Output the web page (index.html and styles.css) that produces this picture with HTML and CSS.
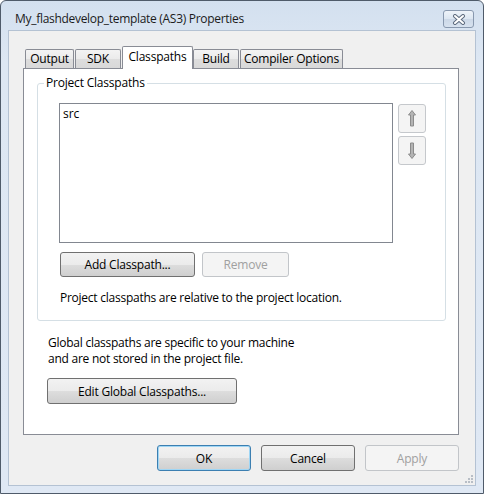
FILE: index.html
```html
<!DOCTYPE html>
<html lang="en">
<head>
    <meta charset="UTF-8">
    <title>My_flashdevelop_template (AS3) Properties</title>
    <link rel="stylesheet" href="styles.css">
</head>
<body>
<div class="window">
    <div class="titlebar">
        <span class="title">My_flashdevelop_template (AS3) Properties</span>
        <div class="close">
            <svg width="14" height="11" viewBox="0 0 14 11">
                <path d="M3 2 L11 9 M11 2 L3 9" stroke="#5d6b7e" stroke-width="4" stroke-linecap="round"/>
                <path d="M3 2 L11 9 M11 2 L3 9" stroke="#fff" stroke-width="2" stroke-linecap="round"/>
            </svg>
        </div>
    </div>

    <div class="client">
        <div class="tabs">
            <div class="tab tab-output">Output</div>
            <div class="tab tab-sdk">SDK</div>
            <div class="tab tab-classpaths selected">Classpaths</div>
            <div class="tab tab-build">Build</div>
            <div class="tab tab-compiler">Compiler Options</div>
        </div>

        <div class="panel">
            <fieldset class="group">
                <legend>Project Classpaths</legend>
                <div class="list-row">
                    <div class="listbox">src</div>
                    <div class="move-buttons">
                        <div class="move-btn">
                            <svg width="8" height="17" viewBox="0 0 8 17">
                                <path d="M4 0.5 L7.5 5 L5.5 5 L5.5 16 L2.5 16 L2.5 5 L0.5 5 Z" fill="#b4b4b4" stroke="#8c8c8c" stroke-width="1"/>
                            </svg>
                        </div>
                        <div class="move-btn">
                            <svg width="8" height="17" viewBox="0 0 8 17">
                                <path d="M4 16.5 L7.5 12 L5.5 12 L5.5 1 L2.5 1 L2.5 12 L0.5 12 Z" fill="#b4b4b4" stroke="#8c8c8c" stroke-width="1"/>
                            </svg>
                        </div>
                    </div>
                </div>
                <div class="list-actions">
                    <button class="btn btn-add">Add Classpath...</button>
                    <button class="btn btn-remove" disabled>Remove</button>
                </div>
                <p class="note">Project classpaths are relative to the project location.</p>
            </fieldset>

            <p class="global-note">Global classpaths are specific to your machine<br>and are not stored in the project file.</p>
            <button class="btn btn-global">Edit Global Classpaths...</button>
        </div>

        <div class="dialog-buttons">
            <button class="btn btn-dialog default">OK</button>
            <button class="btn btn-dialog">Cancel</button>
            <button class="btn btn-dialog" disabled>Apply</button>
        </div>

        <div class="grip">
            <span></span><span></span><span></span>
            <span></span><span></span><span></span>
        </div>
    </div>
</div>
</body>
</html>
```

FILE: styles.css
```css
* {
    box-sizing: border-box;
}

body {
    margin: 0;
    background-color: #ffffff;
    font-family: "Open Sans", "Noto Sans", sans-serif;
    font-size: 12px;
    color: #000;
}

.window {
    width: 484px;
    height: 494px;
    display: flex;
    flex-direction: column;
    border: 1px solid #4f5b6a;
    border-radius: 6px 6px 0 0;
    background: linear-gradient(#d3e0ef, #dde7f3 60px, #dfe8f4);
    padding: 0 7px 7px 7px;
}

/* barra de titulo */
.titlebar {
    height: 29px;
    display: flex;
    align-items: flex-start;
    padding-left: 7px;
}

.title {
    margin-top: 9px;
    color: #1b1b1b;
    letter-spacing: -0.3px;
}

.close {
    margin-left: auto;
    margin-right: 2px;
    margin-top: 9px;
    width: 31px;
    height: 18px;
    border: 1px solid #8898ae;
    border-radius: 3px;
    background: linear-gradient(#eef3f9, #dce6f1 50%, #ccd8e7 51%, #d7e2ef);
    display: flex;
    align-items: center;
    justify-content: center;
}

/* area de cliente */
.client {
    flex: 1;
    position: relative;
    background-color: #f0f0f0;
    border: 1px solid #b4c2d3;
    padding: 15px 16px 0 14px;
}

.tabs {
    display: flex;
    align-items: flex-end;
    height: 22px;
    padding-left: 2px;
}

.tab {
    height: 19px;
    border: 1px solid #898c95;
    border-bottom: none;
    border-radius: 2px 2px 0 0;
    background: linear-gradient(#f3f3f3, #ebebeb 50%, #dddddd 51%, #d9d9d9);
    text-align: center;
    line-height: 17px;
    letter-spacing: -0.2px;
}

.tab.selected {
    height: 23px;
    margin-bottom: -1px;
    position: relative;
    z-index: 1;
    background: #ffffff;
    line-height: 20px;
}

.tab-output { width: 49px; }
.tab-sdk { width: 46px; margin-left: 1px; }
.tab-classpaths { width: 71px; margin-left: 1px; }
.tab-build { width: 46px; }
.tab-compiler { width: 103px; margin-left: 1px; }

.panel {
    width: 436px;
    height: 367px;
    background-color: #ffffff;
    border: 1px solid #898c95;
    padding: 6px 13px 0 13px;
}

.group {
    margin: 0;
    width: 409px;
    border: 1px solid #d5dfe5;
    border-radius: 3px;
    padding: 12px 0 15px 21px;
}

.group legend {
    margin-left: -15px;
    padding: 0 2px;
    line-height: 16px;
    letter-spacing: -0.2px;
}

.list-row {
    display: flex;
    gap: 5px;
}

.listbox {
    width: 334px;
    height: 140px;
    border: 1px solid #828790;
    background: #ffffff;
    padding: 2px 3px;
    line-height: 15px;
}

.move-buttons {
    display: flex;
    flex-direction: column;
    gap: 3px;
    padding-top: 1px;
}

.move-btn {
    width: 28px;
    height: 29px;
    border: 1px solid #c5c8cc;
    border-radius: 3px;
    background: #f4f4f4;
    display: flex;
    align-items: center;
    justify-content: center;
}

.list-actions {
    display: flex;
    gap: 7px;
    margin-top: 9px;
    padding-left: 1px;
}

.btn {
    font-family: inherit;
    font-size: 12px;
    color: #000;
    height: 25px;
    padding: 0;
    border: 1px solid #707070;
    border-radius: 3px;
    background: linear-gradient(#f2f2f2, #ebebeb 50%, #dddddd 51%, #cfcfcf);
    letter-spacing: -0.2px;
}

.btn:disabled {
    color: #a0a0a0;
    border-color: #c2c5c9;
    background: #f4f4f4;
}

.btn-add { width: 135px; }
.btn-remove { width: 87px; }

.note {
    margin: 13px 0 0 1px;
    line-height: 15px;
    letter-spacing: -0.25px;
}

.global-note {
    margin: 14px 0 0 11px;
    line-height: 16px;
    letter-spacing: -0.25px;
}

.btn-global {
    margin: 11px 0 0 10px;
    width: 190px;
    height: 26px;
}

.dialog-buttons {
    display: flex;
    justify-content: flex-end;
    gap: 10px;
    margin-top: 10px;
    width: 436px;
}

.btn-dialog {
    width: 94px;
    height: 26px;
}

.btn-dialog.default {
    border-color: #3c7fb1;
    box-shadow: inset 0 0 0 1px #9fd6f5;
}

.grip {
    position: absolute;
    right: 2px;
    bottom: 2px;
    width: 8px;
    height: 8px;
}

.grip span {
    position: absolute;
    width: 2px;
    height: 2px;
    background: #b8bec6;
}

.grip span:nth-child(1) { right: 0; bottom: 0; }
.grip span:nth-child(2) { right: 3px; bottom: 0; }
.grip span:nth-child(3) { right: 6px; bottom: 0; }
.grip span:nth-child(4) { right: 0; bottom: 3px; }
.grip span:nth-child(5) { right: 3px; bottom: 3px; }
.grip span:nth-child(6) { right: 0; bottom: 6px; }
```
